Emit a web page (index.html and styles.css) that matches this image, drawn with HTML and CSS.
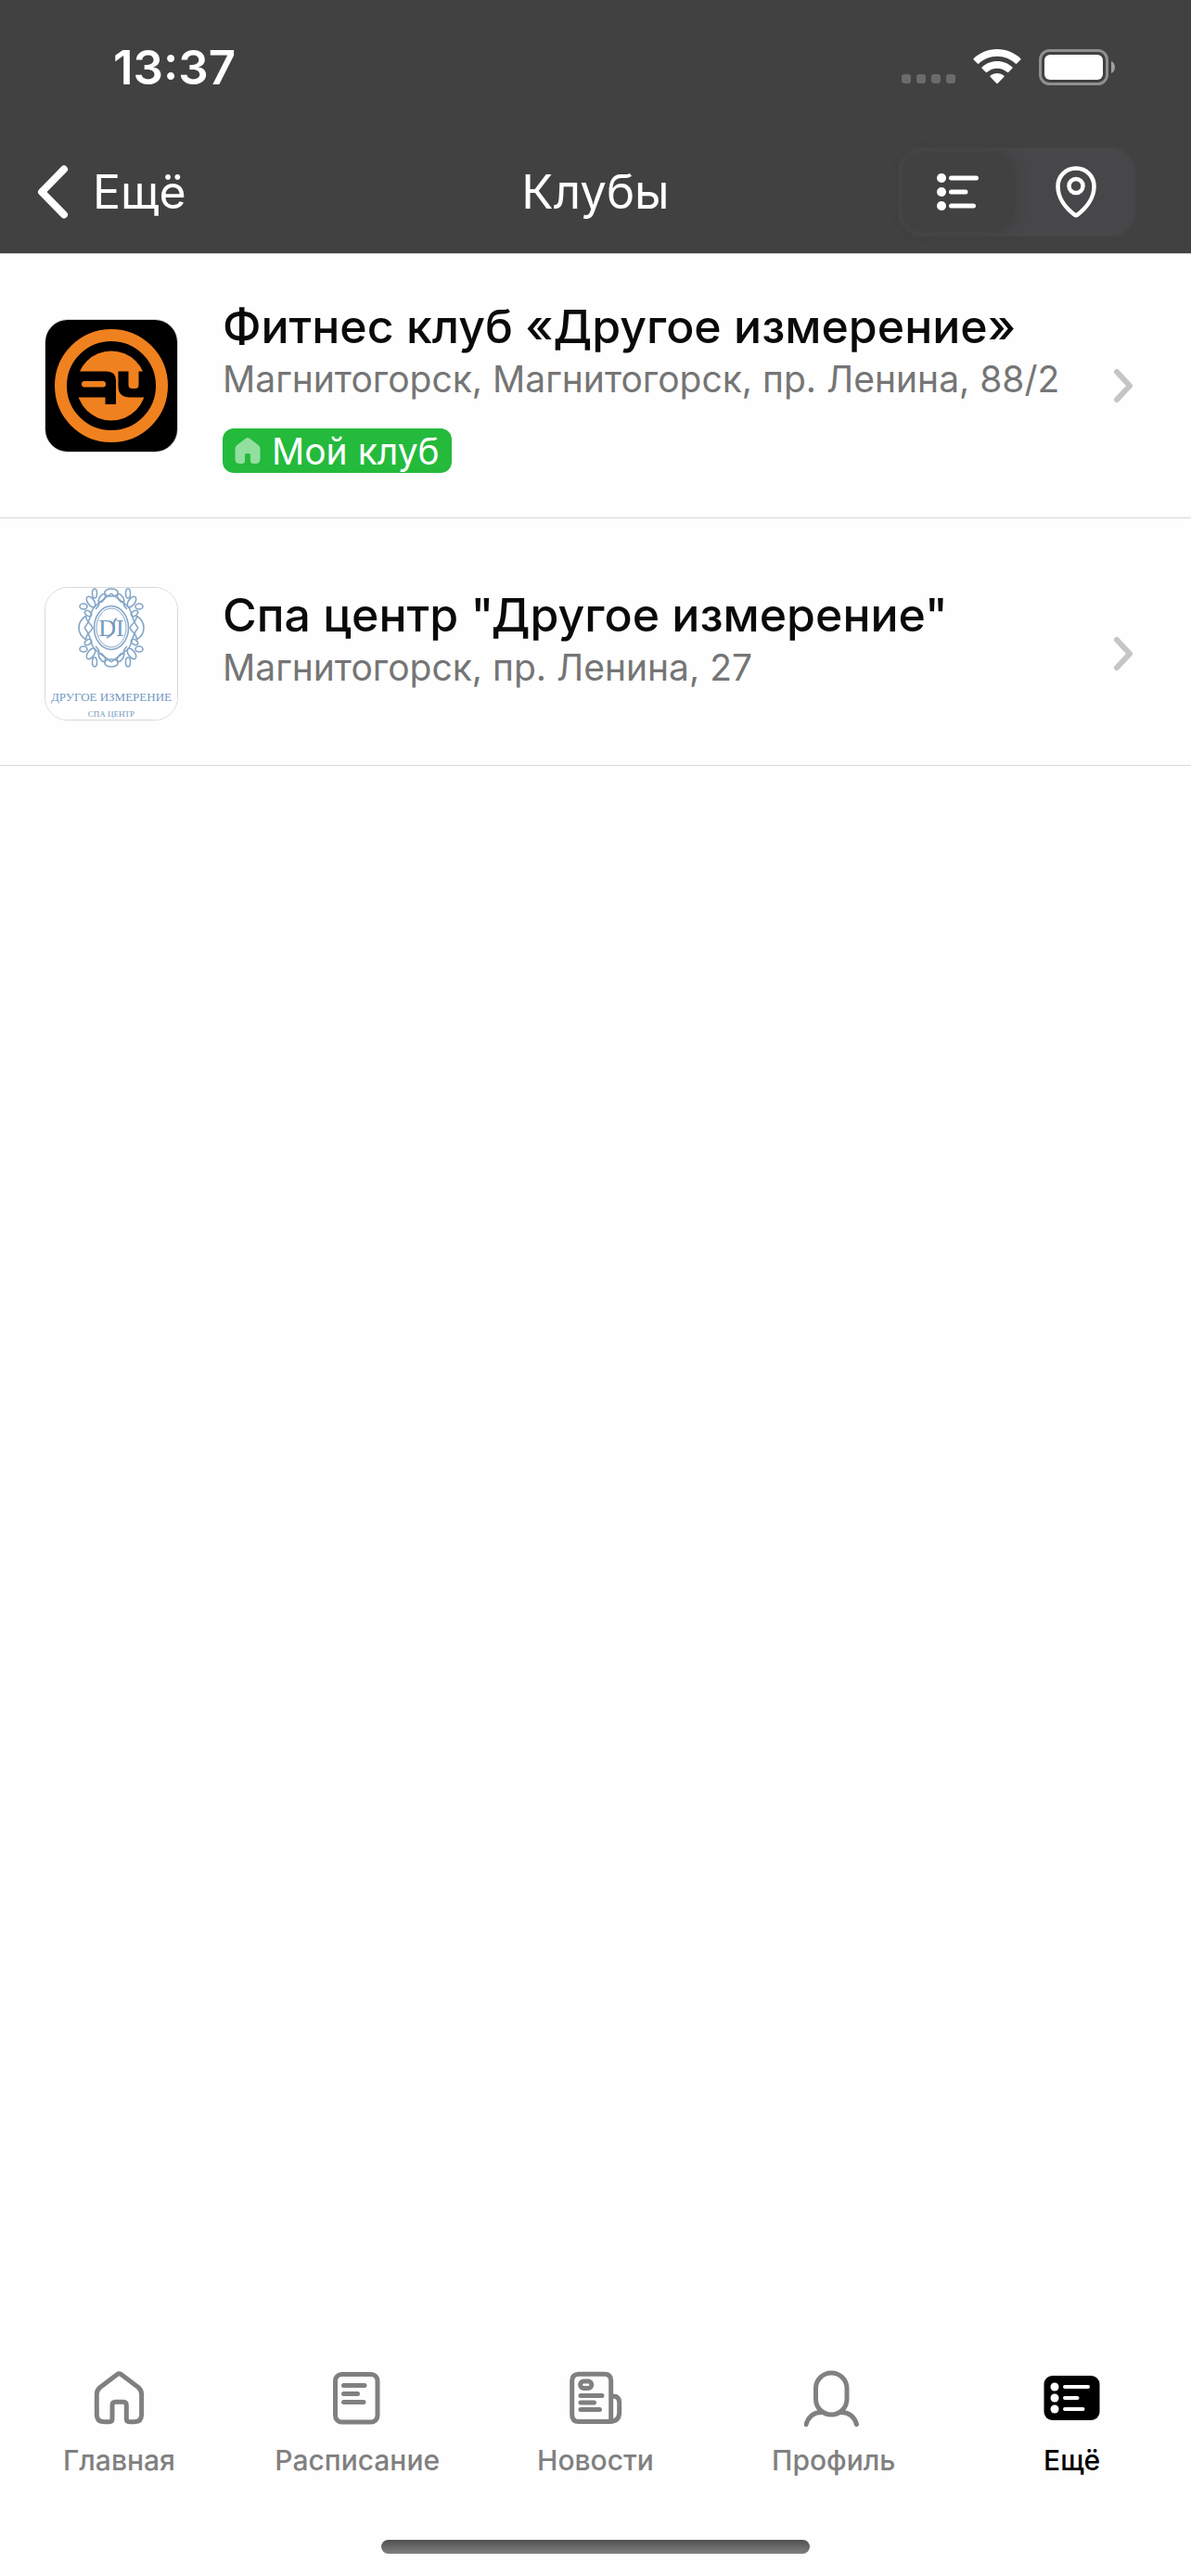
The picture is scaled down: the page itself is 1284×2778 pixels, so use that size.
FILE: index.html
```html
<!DOCTYPE html>
<html lang="ru">
<head>
    <meta charset="UTF-8">
    <meta name="viewport" content="width=device-width, initial-scale=1.0">
    <title>Клубы</title>
    <link rel="stylesheet" href="styles.css">
</head>
<body>
    <header class="header">
        <div class="status-bar">
            <span class="time">13:37</span>
            <div class="status-icons">
                <svg width="58" height="38" viewBox="0 0 58 38" fill="#6b6b6b" aria-hidden="true">
                    <rect x="0" y="27" width="10" height="10" rx="3"/>
                    <rect x="16" y="27" width="10" height="10" rx="3"/>
                    <rect x="32" y="27" width="10" height="10" rx="3"/>
                    <rect x="48" y="27" width="10" height="10" rx="3"/>
                </svg>
                <svg width="52" height="38" viewBox="0 0 52 38" fill="#fff" aria-hidden="true">
                    <path d="M26 0C16 0 7 4 .8 10c-.6.6-.6 1 0 1.500l4 4c.5.5 1 .5 1.500 0C11.500 10.700 18.500 7.800 26 7.800s14.500 2.900 19.700 7.700c.5.5 1 .5 1.500 0l4-4c.6-.5.6-.9 0-1.500C45 4 36 0 26 0z"/>
                    <path d="M26 13c-6.300 0-12 2.400-16.300 6.300-.5.5-.5 1 0 1.500l4 4c.5.5 1 .5 1.500 0 2.900-2.500 6.700-4.100 10.800-4.100s7.900 1.600 10.800 4.100c.5.5 1 .5 1.500 0l4-4c.5-.5.5-1 0-1.500C38 15.400 32.300 13 26 13z"/>
                    <path d="M26 26c-2.800 0-5.300 1-7.300 2.600-.5.5-.5 1 0 1.500l6.500 6.700c.5.500 1.100.500 1.600 0l6.500-6.700c.5-.5.5-1 0-1.500C31.300 27 28.800 26 26 26z"/>
                </svg>
                <svg width="82" height="39" viewBox="0 0 82 39" aria-hidden="true">
                    <rect x="1.500" y="1.500" width="72" height="36" rx="10" fill="none" stroke="#8f8f8f" stroke-width="3"/>
                    <rect x="6" y="6" width="63" height="27" rx="6" fill="#fff"/>
                    <path d="M78 13c2.500 1.200 4 3.600 4 6.500s-1.500 5.300-4 6.500z" fill="#a0a0a0"/>
                </svg>
            </div>
        </div>
        <div class="nav-bar">
            <a class="back" href="#more">
                <svg width="34" height="58" viewBox="0 0 34 58" aria-hidden="true">
                    <path d="M29 4.500L5 29l24 24.500" fill="none" stroke="#fff" stroke-width="8" stroke-linecap="round" stroke-linejoin="round"/>
                </svg>
                Ещё
            </a>
            <h1 class="nav-title">Клубы</h1>
            <div class="view-switch">
                <button class="view-button active" type="button" aria-label="Список" aria-pressed="true">
                    <svg width="46" height="58" viewBox="0 0 46 58" fill="#fff" stroke="#fff" aria-hidden="true">
                        <g stroke="none">
                            <circle cx="5" cy="14" r="5"/>
                            <circle cx="5" cy="29" r="5"/>
                            <circle cx="5" cy="44" r="5"/>
                        </g>
                        <path d="M15.500 14h27M15.500 29h15.500M15.500 44h24" stroke-width="5" stroke-linecap="round"/>
                    </svg>
                </button>
                <button class="view-button" type="button" aria-label="Карта" aria-pressed="false">
                    <svg width="46" height="58" viewBox="0 0 46 58" fill="none" stroke="#fff" stroke-width="4.500" stroke-linejoin="round" aria-hidden="true">
                        <path d="M24 3.500C13 3.500 4.500 11.800 4.500 23c0 12.500 8.500 23.500 18 30.600q1.500 1 3 0c9.500-7.100 18-18.100 18-30.600C43.500 11.800 35 3.500 24 3.500z"/>
                        <circle cx="24" cy="22.500" r="7.500"/>
                    </svg>
                </button>
            </div>
        </div>
    </header>

    <main class="clubs">
        <a class="club" href="#fitness">
            <svg class="logo" viewBox="0 0 142 142" aria-hidden="true">
                <rect width="142" height="142" fill="#000"/>
                <circle cx="71" cy="71" r="54.500" fill="none" stroke="#f0811f" stroke-width="13"/>
                <circle cx="71" cy="71" r="37.500" fill="#f0811f"/>
                <path d="M30 55.500h36q10 0 10 10V91H64.500v-7.500H30z"/>
                <rect x="39" y="66" width="26" height="6.500" rx="3" fill="#f0811f"/>
                <path d="M78.500 55.500h11V70q0 4 4 4h3.500q3.500 0 3.500-4V55.500H111v28H91q-12.500 0-12.500-12z"/>
            </svg>
            <div class="club-info">
                <h2 class="club-name">Фитнес клуб «Другое измерение»</h2>
                <p class="club-address">Магнитогорск, Магнитогорск, пр. Ленина, 88/2</p>
                <span class="badge">
                    <svg width="28" height="30" viewBox="0 0 28 30" aria-hidden="true">
                        <path d="M12.300 1.600L2.500 9Q.5 10.600.5 13v11q0 5 5 5h2.500q3 0 3-3v-6q0-2 2-2h2q2 0 2 2v6q0 3 3 3h2.500q5 0 5-5V13q0-2.400-2-4l-9.800-7.400q-1.700-1.200-3.400 0z" fill="#93dfa0"/>
                    </svg>
                    Мой клуб
                </span>
            </div>
            <svg class="chevron" width="22" height="38" viewBox="0 0 22 38" aria-hidden="true">
                <path d="M4 4l14 15L4 34"/>
            </svg>
        </a>
        <a class="club club-spa" href="#spa">
            <svg class="logo" viewBox="0 0 142 142" aria-hidden="true">
                <defs>
                    <!-- четверть орнамента, отражается по осям -->
                    <g id="ornament">
                        <ellipse cx="-18" cy="-37" rx="2.500" ry="5"/>
                        <ellipse cx="-22" cy="-28" rx="3.500" ry="6.500" transform="rotate(-35 -22 -28)"/>
                        <ellipse cx="-30" cy="-23" rx="4" ry="3"/>
                        <ellipse cx="-25" cy="-15.500" rx="4" ry="2.500" transform="rotate(35 -25 -15.500)"/>
                        <ellipse cx="-10" cy="-32" rx="2.500" ry="5" transform="rotate(35 -10 -32)"/>
                        <path d="M0-34c-4 0-8-1-7-4.500S-3-42 0-42M0-37C-8-30-17-26-20-20S-22-8-29 0M-27-13C-32-10-35-5-35 0M-27-12C-28-7-22-5-20 0M-14-29c2 4 0 6-3 9"/>
                    </g>
                </defs>
                <rect width="142" height="142" fill="#fff"/>
                <g transform="translate(71 43)" fill="none" stroke="#83a5c7" stroke-width="1.600">
                    <ellipse rx="18.500" ry="23.500"/>
                    <ellipse rx="16" ry="21" stroke-width="1"/>
                    <use href="#ornament"/>
                    <use href="#ornament" transform="scale(-1 1)"/>
                    <use href="#ornament" transform="scale(1 -1)"/>
                    <use href="#ornament" transform="scale(-1 -1)"/>
                    <path d="M-5 11Q4 6 3-1T6-10" stroke-width="2"/>
                </g>
                <g class="logo-text" text-anchor="middle">
                    <text x="71" y="52" font-size="26">DI</text>
                    <text x="71" y="122" font-size="13">ДРУГОЕ ИЗМЕРЕНИЕ</text>
                    <text x="71" y="139" font-size="9">СПА ЦЕНТР</text>
                </g>
            </svg>
            <div class="club-info">
                <h2 class="club-name">Спа центр "Другое измерение"</h2>
                <p class="club-address">Магнитогорск, пр. Ленина, 27</p>
            </div>
            <svg class="chevron" width="22" height="38" viewBox="0 0 22 38" aria-hidden="true">
                <path d="M4 4l14 15L4 34"/>
            </svg>
        </a>
    </main>

    <footer class="footer">
        <nav class="tabs">
            <a class="tab" href="#home">
                <svg class="tab-icon" viewBox="0 0 64 64" aria-hidden="true">
                    <path d="M30.500 7.500L12 21.500Q8.300 24.500 8.300 29v22q0 7.700 7.700 7.700h6q3 0 3-3.200V41q0-3.700 3.500-3.700H37q3.300 0 3.300 3.700v14.500q0 3.200 3.200 3.200H49q7.600 0 7.600-7.700V29q0-4.500-3.600-7.500l-18.500-14q-2-1.500-4 0z"/>
                </svg>
                Главная
            </a>
            <a class="tab" href="#schedule">
                <svg class="tab-icon" viewBox="0 0 64 64" aria-hidden="true">
                    <rect x="8.500" y="7.500" width="45.500" height="51.500" rx="7"/>
                    <path d="M17.500 19.500h22.500M17.500 28.500h15M17.500 37.500h21.500"/>
                </svg>
                Расписание
            </a>
            <a class="tab" href="#news">
                <svg class="tab-icon" viewBox="0 0 64 64" aria-hidden="true">
                    <path d="M49 58.500H14q-7.300 0-7.300-7.500V14.500Q6.700 7.300 14 7.300h27.500q7.200 0 7.200 7.200v44q9-1 9-10V38q0-7-7-7h-1.500"/>
                    <rect x="15.700" y="15" width="12" height="7.500" rx="3.500"/>
                    <path d="M16 30.500h23M16 38h14.500M16 45.500h20.500"/>
                </svg>
                Новости
            </a>
            <a class="tab" href="#profile">
                <svg class="tab-icon" viewBox="0 0 64 64" aria-hidden="true">
                    <rect x="12.500" y="6" width="33.500" height="45" rx="16.700"/>
                    <path d="M2 61.500C4 54 10 48 19 48.500M56.500 61.500C54.500 54 48.500 48 39.500 48.500"/>
                </svg>
                Профиль
            </a>
            <a class="tab active" href="#more" aria-current="page">
                <svg class="tab-icon" viewBox="0 0 64 64" aria-hidden="true">
                    <rect x="1.500" y="9" width="60" height="48" rx="9" fill="#000" stroke="none"/>
                    <g fill="#fff" stroke="none">
                        <circle cx="13" cy="21" r="4.500"/>
                        <circle cx="13" cy="33" r="4.500"/>
                        <circle cx="13" cy="45" r="4.500"/>
                    </g>
                    <path class="tab-lines" d="M24 21h25M24 33h13.500M24 45h19.500"/>
                </svg>
                Ещё
            </a>
        </nav>
        <div class="home-indicator"></div>
    </footer>
</body>
</html>
```

FILE: styles.css
```css
* {
    box-sizing: border-box;
}
body {
    display: flex;
    flex-direction: column;
    min-height: 100vh;
    margin: 0;
    font-family: Inter, "Liberation Sans", sans-serif;
    background-color: #fefefe;
    color: #0a0a0a;
}
h1, h2, p {
    margin: 0;
}
a {
    color: inherit;
    text-decoration: none;
}
svg {
    display: block;
    flex-shrink: 0;
}

/* Шапка */
.header {
    background-color: #414141;
    color: #fff;
    border-bottom: 1px solid #d0d0d0;
}
.status-bar {
    display: flex;
    align-items: center;
    justify-content: space-between;
    height: 144px;
    padding: 0 82px 0 122px;
}
.time {
    font-size: 51px;
    font-weight: 600;
}
.status-icons {
    display: flex;
    align-items: center;
    gap: 19px;
}
.nav-bar {
    display: grid;
    grid-template-columns: 1fr auto 1fr;
    align-items: center;
    height: 129px;
    padding: 0 40px 4px;
}
.back {
    display: flex;
    align-items: center;
    gap: 26px;
    font-size: 50px;
}
.nav-title {
    font-size: 51px;
    font-weight: 400;
}
.view-switch {
    display: grid;
    grid-template-columns: 1fr 1fr;
    gap: 5px;
    justify-self: end;
    width: 256px;
    height: 96px;
    margin-right: 20px;
    padding: 5px;
    border-radius: 27px;
    background-color: #474749;
}
.view-button {
    display: flex;
    align-items: center;
    justify-content: center;
    padding: 0;
    border: none;
    border-radius: 22px;
    background: none;
    cursor: pointer;
}
.view-button.active {
    background-color: #414141;
    box-shadow: 0 0 12px rgba(60, 60, 60, 0.6);
}

/* Список клубов */
.clubs {
    flex: 1;
}
.club {
    display: flex;
    align-items: center;
    gap: 48px;
    padding: 48px 62px 48px 48px;
    border-bottom: 1px solid #d8d8d8;
}
.club-spa {
    padding-top: 74px;
}
.logo {
    width: 144px;
    height: 144px;
    border: 1px solid #d8d8d8;
    border-radius: 25px;
}
.logo-text {
    font-family: "Liberation Serif", serif;
    fill: #7299bf;
}
.club-info {
    flex: 1;
    min-width: 0;
    min-height: 144px;
}
.club-name {
    font-size: 50px;
    font-weight: 500;
    line-height: 60px;
}
.club-address {
    margin-top: 3px;
    font-size: 39px;
    line-height: 48px;
    color: #757575;
}
.badge {
    display: flex;
    align-items: center;
    gap: 12px;
    width: fit-content;
    height: 48px;
    margin-top: 29px;
    padding: 0 13px;
    border-radius: 12px;
    background-color: #24ba3c;
    color: #fff;
    font-size: 39px;
}
.chevron path {
    fill: none;
    stroke: #c5c5c7;
    stroke-width: 6;
    stroke-linecap: round;
    stroke-linejoin: round;
}

/* Нижнее меню */
.tabs {
    display: grid;
    grid-template-columns: repeat(5, 1fr);
}
.tab {
    display: flex;
    flex-direction: column;
    align-items: center;
    gap: 18px;
    color: #808080;
    font-size: 30px;
    font-weight: 500;
    line-height: 36px;
}
.tab.active {
    color: #000;
}
.tab-icon {
    width: 64px;
    height: 64px;
    fill: none;
    stroke: #808080;
    stroke-width: 5;
    stroke-linecap: round;
    stroke-linejoin: round;
}
.tab-lines {
    stroke: #fff;
    stroke-width: 4;
}
.home-indicator {
    width: 36%;
    height: 15px;
    margin: 68px auto 24px;
    border-radius: 8px;
    background: linear-gradient(#505050, #808080);
}
```
